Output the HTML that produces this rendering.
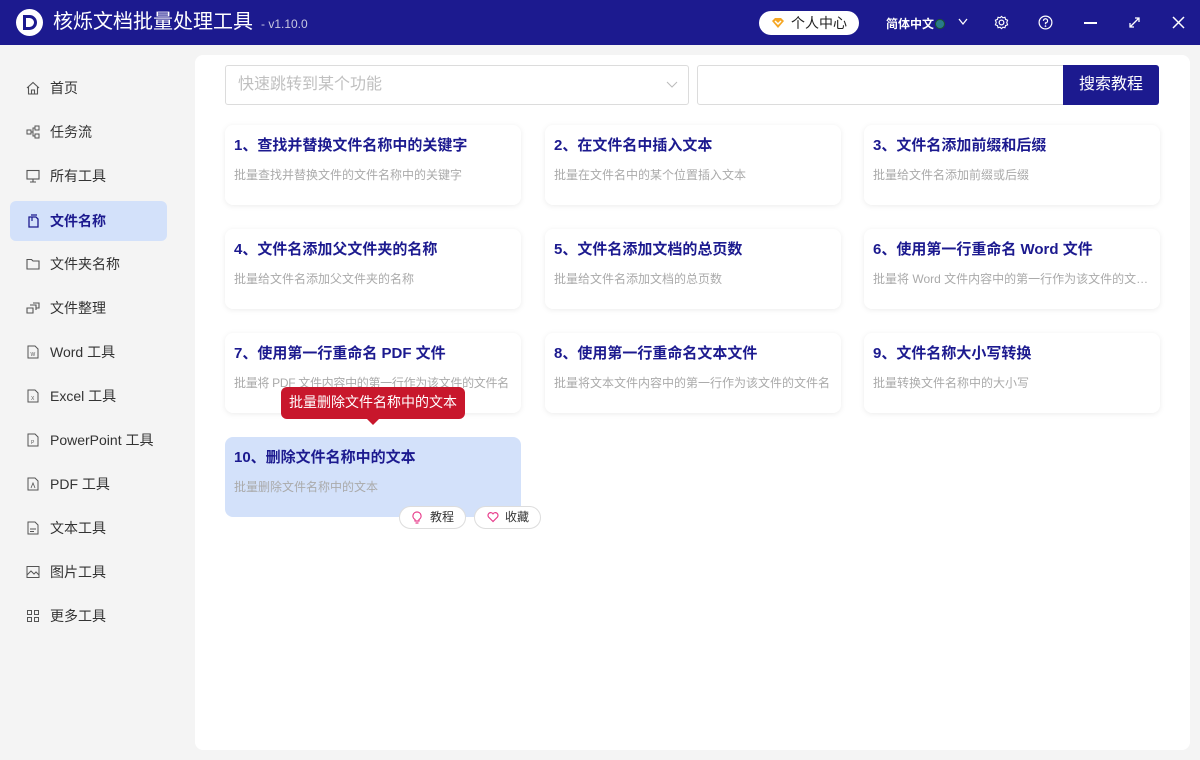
<!DOCTYPE html>
<html><head><meta charset="utf-8"><style>
*{margin:0;padding:0;box-sizing:border-box}
body{width:1200px;height:760px;overflow:hidden;background:#f4f4f4;font-family:"Liberation Sans","Noto Sans CJK SC",sans-serif;position:relative}
.hd{position:absolute;left:0;top:0;width:1200px;height:45px;background:#1c1a8f;color:#fff}
.logo{position:absolute;left:16px;top:9px;width:27px;height:27px;border-radius:50%;background:#fff;}
.logo:after{content:"";position:absolute;left:7px;top:6px;width:8px;height:9px;border:3px solid #1c1a8f;border-radius:0 8px 8px 0}
.title{position:absolute;left:53px;top:10px;font-size:20px;line-height:24px;white-space:nowrap}
.ver{position:absolute;left:261px;top:17px;font-size:12px;color:#c8c8e0}
.pc{position:absolute;left:759px;top:11px;width:100px;height:24px;background:#fff;border-radius:12px;color:#222;font-size:14px;line-height:24px;padding-left:32px}
.pc svg{position:absolute;left:12px;top:6px}
.lang{position:absolute;left:886px;top:15px;font-size:12px;font-weight:bold}
.side .it{position:absolute;left:10px;width:157px;height:40px;font-size:14px;color:#333;line-height:40px;padding-left:40px}
.side .it svg{position:absolute;left:16px;top:13px}
.side .act{background:#d3e1fa;color:#1c1a8f;border-radius:6px;font-weight:bold}
.main{position:absolute;left:195px;top:55px;width:995px;height:695px;background:#fff;border-radius:8px}
.inp{position:absolute;top:65px;height:40px;border:1px solid #dcdcdc;border-radius:3px;background:#fff;font-size:16px;color:#c0c0c0;line-height:38px;padding-left:12px}
.btn{position:absolute;left:1063px;top:65px;width:96px;height:40px;background:#1c1a8f;color:#fff;font-size:16px;line-height:40px;text-align:center;border-radius:0 3px 3px 0}
.card{position:absolute;width:296px;height:80px;background:#fff;border-radius:8px;box-shadow:0 1px 6px rgba(0,0,0,0.08);padding:11px 9px}
.card b{display:block;font-size:15px;color:#1c1a8f;height:20px;line-height:20px;white-space:nowrap}
.card span{display:block;margin-top:10px;font-size:12px;color:#aaa;white-space:nowrap;overflow:hidden;text-overflow:ellipsis}
.tip{position:absolute;left:281px;top:387px;width:184px;height:32px;background:#c8172c;color:#fff;border-radius:6px;font-size:14px;line-height:30px;text-align:center}
.tip:after{content:"";position:absolute;left:85px;top:31px;border:7px solid transparent;border-top-color:#c8172c;border-bottom:0}
.pill{position:absolute;top:506px;height:23px;border:1px solid #ddd;border-radius:12px;background:#fff;font-size:12px;line-height:21px;color:#333;padding-left:30px}
.pill svg{position:absolute;left:12px;top:4px}
</style></head><body>
<div class="hd">
<div class="logo"></div>
<div class="title">核烁文档批量处理工具</div>
<div class="ver">- v1.10.0</div>
<div class="pc"><svg width="14" height="12" viewBox="0 0 14 12"><path d="M1 4L4 1H10L13 4L7 11Z" fill="#f5a623"/><path d="M4 4L7 7L10 4" stroke="#fff" stroke-width="1.5" fill="none"/></svg>个人中心</div>
<div class="lang">简体中文<span style="display:inline-block;width:10px;height:10px;border-radius:50%;background:#2a7a8a;margin-left:1px;vertical-align:-1px;border:1px solid #1a5a2a"></span></div>
<svg style="position:absolute;left:958px;top:18px" width="10" height="8"><path d="M1 1L5 6L9 1" stroke="#fff" fill="none" stroke-width="1.3"/></svg>
<svg style="position:absolute;left:994px;top:15px" width="15" height="15" viewBox="0 0 16 16"><circle cx="8" cy="8" r="2.5" stroke="#fff" fill="none" stroke-width="1.3"/><path d="M8 1.5L9.5 3L11.7 2.5L12.3 4.7L14.5 5.5L13.6 8L14.5 10.5L12.3 11.3L11.7 13.5L9.5 13L8 14.5L6.5 13L4.3 13.5L3.7 11.3L1.5 10.5L2.4 8L1.5 5.5L3.7 4.7L4.3 2.5L6.5 3Z" stroke="#fff" fill="none" stroke-width="1.2"/></svg>
<svg style="position:absolute;left:1038px;top:15px" width="15" height="15" viewBox="0 0 16 16"><circle cx="8" cy="8" r="6.8" stroke="#fff" fill="none" stroke-width="1.3"/><path d="M5.8 6.2A2.2 2.2 0 1 1 8 8.4V9.8" stroke="#fff" fill="none" stroke-width="1.3"/><circle cx="8" cy="11.8" r="0.9" fill="#fff"/></svg>
<div style="position:absolute;left:1084px;top:22px;width:13px;height:1.5px;background:#fff"></div>
<svg style="position:absolute;left:1128px;top:16px" width="13" height="13"><path d="M2 11L11 2M7 2H11V6M2 7V11H6" stroke="#fff" fill="none" stroke-width="1.3"/></svg>
<svg style="position:absolute;left:1172px;top:16px" width="13" height="13"><path d="M1 1L12 12M12 1L1 12" stroke="#fff" stroke-width="1.5"/></svg>
</div>
<div class="side">
<div class="it" style="top:68px"><svg width="14" height="14" viewBox="0 0 14 14"><path d="M1 7L7 1.5L13 7M2.5 6V13H11.5V6M5.5 13V9H8.5V13" stroke="#555" fill="none" stroke-width="1.1"/></svg>首页</div>
<div class="it" style="top:112px"><svg width="14" height="14" viewBox="0 0 14 14"><rect x="1" y="5" width="4" height="4" stroke="#555" fill="none"/><rect x="9" y="1" width="4" height="4" stroke="#555" fill="none"/><rect x="9" y="9" width="4" height="4" stroke="#555" fill="none"/><path d="M5 7H7V3H9M7 7V11H9" stroke="#555" fill="none"/></svg>任务流</div>
<div class="it" style="top:156px"><svg width="14" height="14" viewBox="0 0 14 14"><rect x="1" y="1.5" width="12" height="8.5" stroke="#555" fill="none" stroke-width="1.1"/><path d="M7 10V13M4 13H10" stroke="#555" stroke-width="1.1"/></svg>所有工具</div>
<div class="it act" style="top:201px"><svg width="14" height="14" viewBox="0 0 14 14"><path d="M3 3H10L12 5V13H3Z M5 1H11" stroke="#1c1a8f" fill="none" stroke-width="1.3"/><path d="M6 3V7" stroke="#1c1a8f" stroke-width="1.2"/></svg>文件名称</div>
<div class="it" style="top:244px"><svg width="14" height="14" viewBox="0 0 14 14"><path d="M1 2.5H5.5L7 4H13V12H1Z" stroke="#555" fill="none" stroke-width="1.1"/></svg>文件夹名称</div>
<div class="it" style="top:288px"><svg width="14" height="14" viewBox="0 0 14 14"><path d="M1 7H7V12H1ZM4 4H10V9M7 2H13V7H10" stroke="#555" fill="none" stroke-width="1.1"/></svg>文件整理</div>
<div class="it" style="top:332px"><svg width="14" height="14" viewBox="0 0 14 14"><path d="M2 1H9L12 4V13H2Z" stroke="#555" fill="none"/><text x="4.5" y="11" font-size="5" fill="#555">W</text></svg>Word 工具</div>
<div class="it" style="top:376px"><svg width="14" height="14" viewBox="0 0 14 14"><path d="M2 1H9L12 4V13H2Z" stroke="#555" fill="none"/><text x="5" y="11" font-size="5" fill="#555">X</text></svg>Excel 工具</div>
<div class="it" style="top:420px"><svg width="14" height="14" viewBox="0 0 14 14"><path d="M2 1H9L12 4V13H2Z" stroke="#555" fill="none"/><text x="5" y="11" font-size="5" fill="#555">P</text></svg>PowerPoint 工具</div>
<div class="it" style="top:464px"><svg width="14" height="14" viewBox="0 0 14 14"><path d="M2 1H9L12 4V13H2Z" stroke="#555" fill="none"/><path d="M5 11L7 6L9 11" stroke="#555" fill="none" stroke-width=".8"/></svg>PDF 工具</div>
<div class="it" style="top:508px"><svg width="14" height="14" viewBox="0 0 14 14"><path d="M2 1H9L12 4V13H2Z" stroke="#555" fill="none"/><path d="M4 8H10M4 10.5H8" stroke="#555"/></svg>文本工具</div>
<div class="it" style="top:552px"><svg width="14" height="14" viewBox="0 0 14 14"><rect x="1" y="1.5" width="12" height="11" stroke="#555" fill="none"/><path d="M1 10L5 6L8 9L10 7L13 10" stroke="#555" fill="none"/></svg>图片工具</div>
<div class="it" style="top:596px"><svg width="14" height="14" viewBox="0 0 14 14"><rect x="1.5" y="1.5" width="4" height="4" stroke="#555" fill="none"/><rect x="8.5" y="1.5" width="4" height="4" stroke="#555" fill="none"/><rect x="1.5" y="8.5" width="4" height="4" stroke="#555" fill="none"/><rect x="8.5" y="8.5" width="4" height="4" stroke="#555" fill="none"/></svg>更多工具</div>
</div>
<div class="main"></div>
<div class="inp" style="left:225px;width:464px">快速跳转到某个功能<svg style="position:absolute;right:10px;top:15px" width="12" height="8"><path d="M1 1L6 6L11 1" stroke="#bbb" fill="none"/></svg></div>
<div class="inp" style="left:697px;width:370px"></div>
<div class="btn">搜索教程</div>

<div class="card" style="left:225px;top:125px"><b>1、查找并替换文件名称中的关键字</b><span>批量查找并替换文件的文件名称中的关键字</span></div>
<div class="card" style="left:545px;top:125px"><b>2、在文件名中插入文本</b><span>批量在文件名中的某个位置插入文本</span></div>
<div class="card" style="left:864px;top:125px"><b>3、文件名添加前缀和后缀</b><span>批量给文件名添加前缀或后缀</span></div>
<div class="card" style="left:225px;top:229px"><b>4、文件名添加父文件夹的名称</b><span>批量给文件名添加父文件夹的名称</span></div>
<div class="card" style="left:545px;top:229px"><b>5、文件名添加文档的总页数</b><span>批量给文件名添加文档的总页数</span></div>
<div class="card" style="left:864px;top:229px"><b>6、使用第一行重命名 Word 文件</b><span>批量将 Word 文件内容中的第一行作为该文件的文件名</span></div>
<div class="card" style="left:225px;top:333px"><b>7、使用第一行重命名 PDF 文件</b><span style="overflow:visible;letter-spacing:-0.3px">批量将 PDF 文件内容中的第一行作为该文件的文件名</span></div>
<div class="card" style="left:545px;top:333px"><b>8、使用第一行重命名文本文件</b><span>批量将文本文件内容中的第一行作为该文件的文件名</span></div>
<div class="card" style="left:864px;top:333px"><b>9、文件名称大小写转换</b><span>批量转换文件名称中的大小写</span></div>
<div class="card" style="left:225px;top:437px;background:#d3e1fa;box-shadow:none"><b>10、删除文件名称中的文本</b><span>批量删除文件名称中的文本</span></div>
<div class="tip">批量删除文件名称中的文本</div>
<div class="pill" style="left:399px;width:67px"><svg width="10" height="14" viewBox="0 0 10 14"><path d="M5 1A4 4 0 0 0 3 8.5V10H7V8.5A4 4 0 0 0 5 1ZM3.5 12H6.5" stroke="#e83e8c" fill="none" stroke-width="1.2"/></svg>教程</div>
<div class="pill" style="left:474px;width:67px"><svg width="12" height="12" viewBox="0 0 12 12"><path d="M6 10.5L1.5 6A2.5 2.5 0 0 1 6 2.8A2.5 2.5 0 0 1 10.5 6Z" stroke="#e83e8c" fill="none" stroke-width="1.2"/></svg>收藏</div>
</body></html>
